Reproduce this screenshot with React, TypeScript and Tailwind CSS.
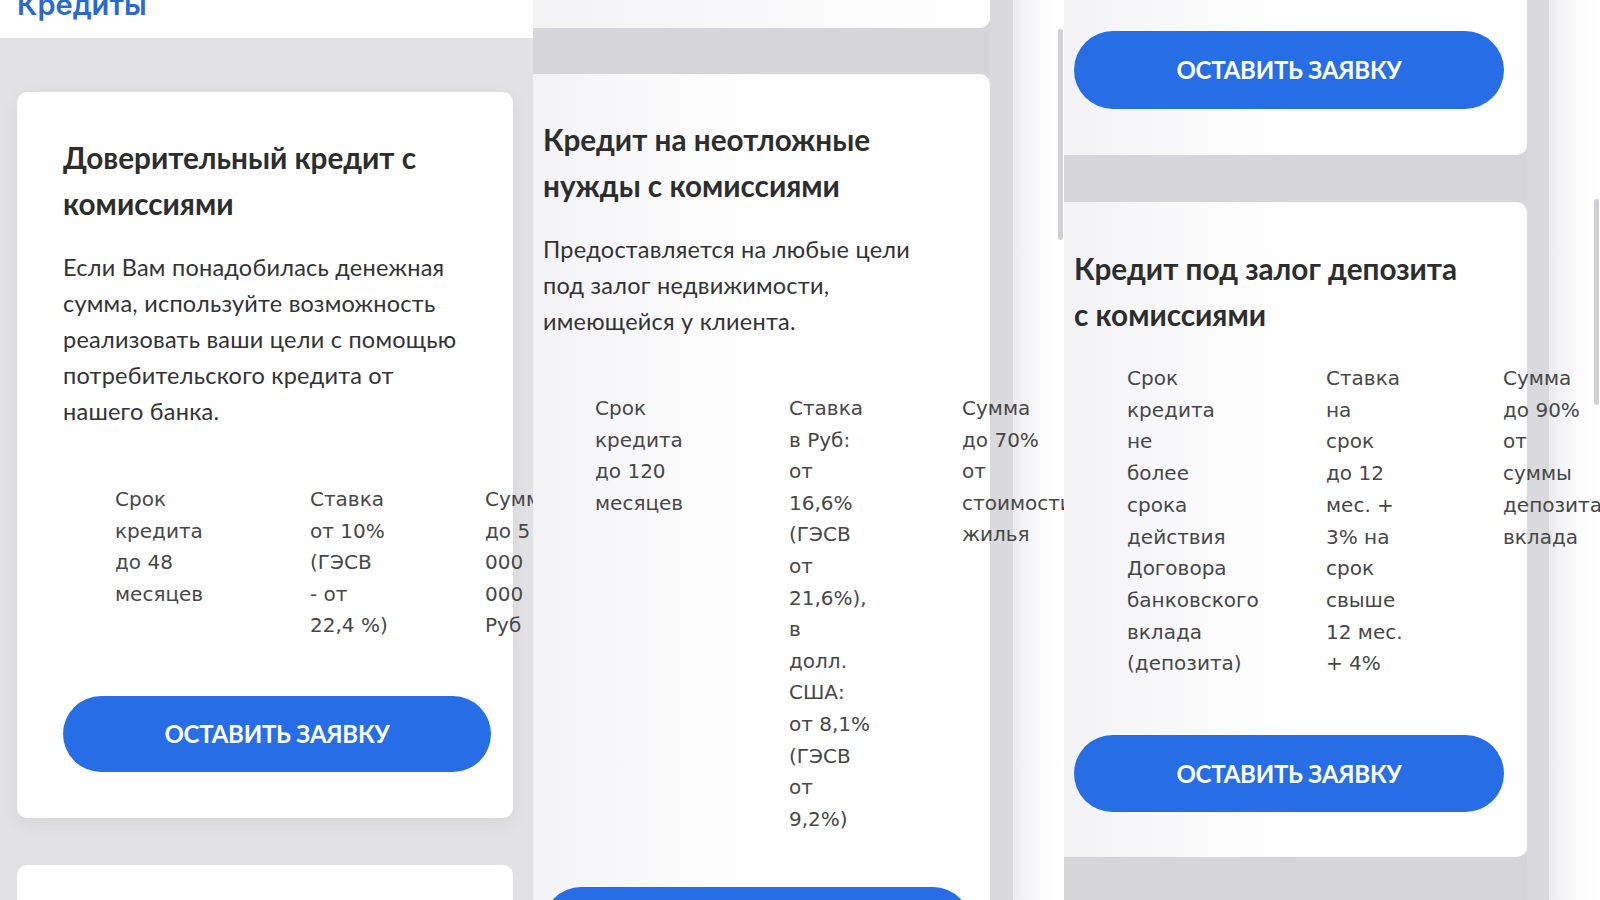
import React from 'react';

type Col = { w: string; lines: string[] };

const ApplyButton = ({ className }: { className: string }) => (
  <button
    type="button"
    className={`flex shrink-0 items-center justify-center rounded-full bg-[#276ee6] text-white font-['Lato',sans-serif] font-bold text-[24px] tracking-[-0.01em] ${className}`}
  >
    ОСТАВИТЬ ЗАЯВКУ
  </button>
);

const Terms = ({ cols, className }: { cols: Col[]; className: string }) => (
  <div className={`flex whitespace-nowrap text-[20px] leading-[31.6px] text-[#474747] font-['DejaVu_Sans',sans-serif] ${className}`}>
    {cols.map((c, i) => (
      <div key={i} className={`shrink-0 ${c.w}`}>
        {c.lines.map((l, j) => (
          <div key={j}>{l}</div>
        ))}
      </div>
    ))}
  </div>
);

const Title = ({ children }: { children: React.ReactNode }) => (
  <h2 className="font-['Lato',sans-serif] font-bold text-[29.7px] leading-[46px] text-[#2d2d2d] whitespace-nowrap">{children}</h2>
);

const Body = ({ children }: { children: React.ReactNode }) => (
  <p className="mt-[22px] font-['Lato',sans-serif] text-[23.5px] tracking-[0.01em] leading-[36px] text-[#333] whitespace-nowrap">{children}</p>
);

function PanelOne() {
  return (
    <div className="relative w-[533px] h-[900px] shrink-0 overflow-hidden bg-[#e2e2e4]">
      <div className="h-[38px] bg-white overflow-hidden">
        <div className="-mt-[10px] pl-[17px] text-[29px] leading-none font-semibold text-[#2a68d2] font-['Inter',sans-serif]">
          Кредиты
        </div>
      </div>
      <div className="ml-[17px] mt-[54px] w-[496px] bg-white rounded-[10px] pt-[43px] pl-[46px] pr-[22px] pb-[46px] shadow-[0_6px_18px_rgba(40,40,60,0.06)]">
        <Title>
          Доверительный кредит с<br />комиссиями
        </Title>
        <Body>
          Если Вам понадобилась денежная<br />
          сумма, используйте возможность<br />
          реализовать ваши цели с помощью<br />
          потребительского кредита от<br />
          нашего банка.
        </Body>
        <Terms
          className="mt-[55px] pl-[52px]"
          cols={[
            { w: 'w-[195px]', lines: ['Срок', 'кредита', 'до 48', 'месяцев'] },
            { w: 'w-[175px]', lines: ['Ставка', 'от 10%', '(ГЭСВ', '- от', '22,4 %)'] },
            { w: 'w-[160px]', lines: ['Сумма', 'до 5', '000', '000', 'Руб'] },
          ]}
        />
        <ApplyButton className="mt-[54px] w-[428px] h-[76px]" />
      </div>
      <div className="ml-[17px] mt-[47px] w-[496px] h-[120px] bg-white rounded-[10px]" />
    </div>
  );
}

function PanelTwo() {
  return (
    <div className="relative w-[531px] h-[900px] shrink-0 overflow-hidden flex bg-white">
      <div className="relative z-10 w-[457px] shrink-0 flex flex-col bg-[#d6d5da]">
        <div className="h-[28px] shrink-0 rounded-br-[10px] bg-gradient-to-r from-[#f3f3f6] to-white" />
        <div className="mt-[46px] shrink-0 rounded-tr-[10px] pt-[43px] pl-[10px] pr-[19px] bg-gradient-to-r from-[#f3f3f6] via-white to-white">
          <Title>
            Кредит на неотложные<br />нужды с комиссиями
          </Title>
          <Body>
            Предоставляется на любые цели<br />
            под залог недвижимости,<br />
            имеющейся у клиента.
          </Body>
          <Terms
            className="mt-[54px] pl-[52px]"
            cols={[
              { w: 'w-[194px]', lines: ['Срок', 'кредита', 'до 120', 'месяцев'] },
              { w: 'w-[173px]', lines: ['Ставка', 'в Руб:', 'от', '16,6%', '(ГЭСВ', 'от', '21,6%),', 'в', 'долл.', 'США:', 'от 8,1%', '(ГЭСВ', 'от', '9,2%)'] },
              { w: 'w-[160px]', lines: ['Сумма', 'до 70%', 'от', 'стоимости', 'жилья'] },
            ]}
          />
          <ApplyButton className="mt-[52px] w-[428px] h-[76px]" />
          <div className="h-[46px]" />
        </div>
      </div>
      <div className="w-[23px] shrink-0 bg-[#dadade]" />
      <div className="flex-1 bg-gradient-to-r from-[#ececef] via-[#fbfbfc] to-white" />
      <div className="absolute z-20 left-[525px] top-[29px] w-[5px] h-[211px] rounded-full bg-[#d0d0d4]" />
    </div>
  );
}

function PanelThree() {
  return (
    <div className="relative w-[536px] h-[900px] shrink-0 overflow-hidden flex bg-white">
      <div className="relative z-10 w-[463px] shrink-0 flex flex-col bg-[#d6d5da]">
        <div className="h-[155px] shrink-0 rounded-br-[10px] pt-[31px] pl-[10px] bg-gradient-to-r from-[#f3f3f6] via-white to-white">
          <ApplyButton className="w-[430px] h-[78px]" />
        </div>
        <div className="mt-[47px] h-[655px] shrink-0 rounded-r-[10px] pt-[44px] pl-[10px] pr-[19px] bg-gradient-to-r from-[#f3f3f6] via-white to-white">
          <Title>
            Кредит под залог депозита<br />с комиссиями
          </Title>
          <Terms
            className="mt-[25px] pl-[53px] leading-[31.7px]"
            cols={[
              { w: 'w-[199px]', lines: ['Срок', 'кредита', 'не', 'более', 'срока', 'действия', 'Договора', 'банковского', 'вклада', '(депозита)'] },
              { w: 'w-[177px]', lines: ['Ставка', 'на', 'срок', 'до 12', 'мес. +', '3% на', 'срок', 'свыше', '12 мес.', '+ 4%'] },
              { w: 'w-[160px]', lines: ['Сумма', 'до 90%', 'от', 'суммы', 'депозита', 'вклада'] },
            ]}
          />
          <ApplyButton className="mt-[55px] w-[430px] h-[77px]" />
        </div>
      </div>
      <div className="w-[22px] shrink-0 bg-[#dadade]" />
      <div className="flex-1 bg-gradient-to-r from-[#ececef] via-[#fbfbfc] to-white" />
      <div className="absolute z-20 left-[530px] top-[199px] w-[5px] h-[206px] rounded-full bg-[#d0d0d4]" />
    </div>
  );
}

export default function App() {
  return (
    <div className="flex w-[1600px] h-[900px] overflow-hidden bg-white">
      <PanelOne />
      <PanelTwo />
      <PanelThree />
    </div>
  );
}
